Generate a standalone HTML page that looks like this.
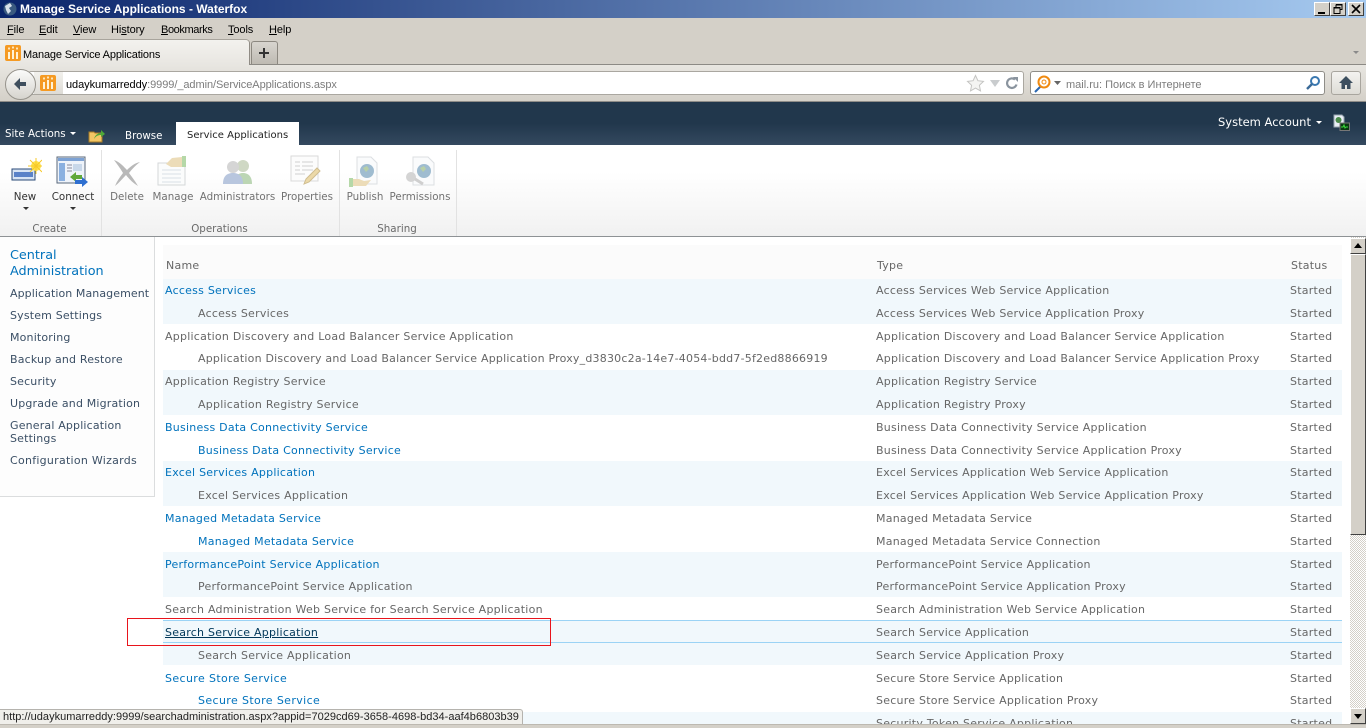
<!DOCTYPE html>
<html><head><meta charset="utf-8"><title>Manage Service Applications - Waterfox</title>
<style>
html,body{margin:0;padding:0;width:1366px;height:728px;overflow:hidden;background:#fff}
div,span,svg{position:absolute;display:block}
u{position:static}
body{font:11px "DejaVu Sans",Verdana,sans-serif;color:#676767}
.t{white-space:nowrap;line-height:14px;height:14px;margin-top:1px;letter-spacing:.24px}
.u{font:11px/16px "Liberation Sans",sans-serif;color:#000;white-space:nowrap;margin-top:1px}
.m{top:21px;height:16px;letter-spacing:-.1px}
.l{color:#0072bc}
.n{color:#3b4f65;left:10px;letter-spacing:.17px}
.h{letter-spacing:0;font-size:10.3px}
.r{left:163px;width:1179px;background:#f1f8fc}
.c{color:#5f5f5f;text-align:center;white-space:nowrap;line-height:14px;font-size:10.3px}
.g{color:#6a6a6a;text-align:center;white-space:nowrap;line-height:14px;top:222px;font-size:10.3px}
.sep{top:150px;width:1px;height:86px;background:#e2e2e2}
.btn{background:#d4d0c8;border:1px solid;border-color:#fff #404040 #404040 #fff;box-sizing:border-box}
</style></head><body>

<div style="left:0;top:0;width:1366px;height:18px;background:linear-gradient(90deg,#0a246a,#a6caf0)"></div>
<svg style="left:2px;top:1px" width="16" height="16" viewBox="0 0 16 16"><circle cx="8" cy="8" r="6.500" fill="#3a5a80"/><path d="M3 5l5-3 2 3-3 2 2 3-3 3-2-4z" fill="#d8e0ea"/></svg>
<div class="u" style="left:20px;top:1px;margin-top:0;color:#fff;font:bold 12px/16px 'Liberation Sans',sans-serif">Manage Service Applications - Waterfox</div>
<div class="btn" style="left:1314px;top:2px;width:16px;height:14px"><div style="left:3px;top:9px;width:7px;height:2px;background:#000"></div></div>
<div class="btn" style="left:1330px;top:2px;width:16px;height:14px"><svg style="left:2px;top:1px" width="10" height="10" viewBox="0 0 10 10"><path d="M3 .5h6v5H7M3 .5V3M1 3.500h6v6H1z" fill="none" stroke="#000"/><path d="M3 1h6M1 4h6" stroke="#000"/></svg></div>
<div class="btn" style="left:1348px;top:2px;width:16px;height:14px"><svg style="left:2px;top:1px" width="10" height="10" viewBox="0 0 10 10"><path d="M1 1l8 8M9 1l-8 8" stroke="#000" stroke-width="1.600"/></svg></div>

<div style="left:0;top:18px;width:1366px;height:47px;background:#d4d0c8"></div>
<div class="u m" style="left:7px"><u>F</u>ile</div>
<div class="u m" style="left:39px"><u>E</u>dit</div>
<div class="u m" style="left:73px"><u>V</u>iew</div>
<div class="u m" style="left:111px">Hi<u>s</u>tory</div>
<div class="u m" style="left:161px;letter-spacing:-.4px"><u>B</u>ookmarks</div>
<div class="u m" style="left:228px"><u>T</u>ools</div>
<div class="u m" style="left:269px"><u>H</u>elp</div>

<div style="left:0;top:40px;width:249px;height:25px;background:linear-gradient(#f3f2ee,#e8e6e1);border-radius:0 3px 0 0;box-shadow:1px 0 0 #908c85,0 -1px 0 #a8a49c"></div>
<svg style="left:5px;top:45px" width="16" height="16" viewBox="0 0 16 16"><rect width="16" height="16" rx="2" fill="#f59a23"/><path d="M3 7h2v7H3zM7 5h2v9H7zM11 7h2v7h-2z" fill="#fff3d8"/><path d="M4 2v3M3 3.500h2M8 1v3M7 2.500h2M12 2v3M11 3.500h2" stroke="#fff3d8" stroke-width=".8"/></svg>
<div class="u" style="left:23px;top:46px;letter-spacing:-.15px">Manage Service Applications</div>
<div style="left:251px;top:41px;width:25px;height:23px;background:linear-gradient(#d8d5cf,#bdb9b1);border:1px solid #8c8880;border-bottom:0;border-radius:3px 3px 0 0"></div>
<svg style="left:258px;top:47px" width="12" height="12" viewBox="0 0 12 12"><path d="M6 1v10M1 6h10" stroke="#333" stroke-width="2"/></svg>
<svg style="left:1352px;top:50px" width="8" height="5"><path d="M1 1h6L4 4z" fill="#8a8a8a"/></svg>

<div style="left:0;top:64px;width:1366px;height:1px;background:#8c8a85;clip-path:inset(0 0 0 249px)"></div>
<div style="left:0;top:65px;width:1366px;height:36px;background:linear-gradient(#e8e6e1,#d4d0c8)"></div>
<div style="left:0;top:101px;width:1366px;height:1px;background:#8e8c88"></div>

<div style="left:28px;top:71px;width:994px;height:22px;background:#fff;border:1px solid #aaa7a0;border-radius:3px"></div>
<div style="left:34px;top:72px;width:29px;height:22px;background:linear-gradient(#f2f1ed,#dedcd6)"></div>
<div style="left:5px;top:69px;width:29px;height:29px;border-radius:50%;background:linear-gradient(#fbfbfa,#d6d4ce);border:1px solid #96938c"></div>
<svg style="left:11px;top:75px" width="18" height="18" viewBox="0 0 18 18"><path d="M9 3L3 9l6 6V11h6V7H9z" fill="#3f4f5e"/></svg>
<svg style="left:40px;top:75px" width="16" height="16" viewBox="0 0 16 16"><rect width="16" height="16" rx="2" fill="#f59a23"/><path d="M3 7h2v7H3zM7 5h2v9H7zM11 7h2v7h-2z" fill="#fff3d8"/><path d="M4 2v3M3 3.500h2M8 1v3M7 2.500h2M12 2v3M11 3.500h2" stroke="#fff3d8" stroke-width=".8"/></svg>
<div class="u" style="left:66px;top:76px;color:#7c7c7c;letter-spacing:-.06px"><span style="position:static;display:inline;color:#000">udaykumarreddy</span>:9999/_admin/ServiceApplications.aspx</div>
<svg style="left:966px;top:74px" width="19" height="19" viewBox="0 0 19 19"><path d="M9.500 1.500l2.400 5.200 5.600.7-4.100 3.900 1.100 5.600-5-2.800-5 2.800 1.100-5.600L1.500 7.400l5.600-.7z" fill="#f4f4f2" stroke="#c4c4c2"/></svg>
<svg style="left:989px;top:79px" width="12" height="9"><path d="M1 1h10L6 8z" fill="#c9ccce"/></svg>
<svg style="left:1005px;top:76px" width="14" height="14" viewBox="0 0 14 14"><path d="M11.500 8.500A4.800 4.800 0 1 1 10 3.500" fill="none" stroke="#8a949e" stroke-width="2.200"/><path d="M8 1h5v5z" fill="#8a949e"/></svg>

<div style="left:1030px;top:71px;width:293px;height:22px;background:#fff;border:1px solid #8f8d88;border-radius:3px"></div>
<svg style="left:1034px;top:75px" width="18" height="18" viewBox="0 0 18 18"><path d="M1 17l6-6" stroke="#2a66b0" stroke-width="2"/><circle cx="10" cy="7" r="5.500" fill="#fff" stroke="#f08a10" stroke-width="2"/><circle cx="10" cy="7" r="2" fill="none" stroke="#f08a10"/></svg>
<svg style="left:1054px;top:81px" width="7" height="5"><path d="M0 0h7L3.500 4z" fill="#666"/></svg>
<div class="u" style="left:1066px;top:76px;color:#7c7c7c">mail.ru: Поиск в Интернете</div>
<svg style="left:1305px;top:75px" width="16" height="16" viewBox="0 0 16 16"><circle cx="10" cy="6" r="4" fill="#fff" stroke="#3a78b0" stroke-width="2"/><path d="M7 9l-5 5" stroke="#3a6a98" stroke-width="2.400"/></svg>
<div style="left:1331px;top:71px;width:28px;height:22px;border:1px solid #a8a59e;border-radius:3px;background:linear-gradient(#f4f3f0,#dedcd6)"></div>
<svg style="left:1338px;top:75px" width="16" height="15" viewBox="0 0 16 15"><path d="M8 1L1 8h2.500v6h3.500v-4h2v4h3.500V8H15z" fill="#3d4f5f"/></svg>

<div style="left:0;top:102px;width:1366px;height:43px;background:linear-gradient(#21374c 0,#21374c 50%,#34495f 100%)"></div>
<div class="t h" style="left:5px;top:126px;color:#fff">Site Actions</div>
<svg style="left:70px;top:132px" width="6" height="4"><path d="M0 0h6L3 3z" fill="#fff"/></svg>
<svg style="left:88px;top:127px" width="18" height="16" viewBox="0 0 18 16"><path d="M1 5h5l1 1h7v9H1z" fill="#f2c665" stroke="#a57a26"/><path d="M6 12c1-4 4-6 7-6V3l4 4-4 3V8c-3 0-5 1-7 4z" fill="#4fa838"/></svg>
<div class="t h" style="left:125px;top:128px;color:#fff">Browse</div>
<div style="left:176px;top:122px;width:123px;height:23px;background:#fff"></div>
<div class="t h" style="left:187px;top:128px;color:#222;font-size:10px">Service Applications</div>
<div class="t" style="left:1218px;top:114px;color:#fff;font-size:11.5px;letter-spacing:0">System Account</div>
<svg style="left:1316px;top:121px" width="6" height="4"><path d="M0 0h6L3 3z" fill="#fff"/></svg>
<svg style="left:1333px;top:114px" width="17" height="17" viewBox="0 0 17 17"><path d="M1 1h8l2 2v10H1z" fill="#e8eef5" stroke="#98a4b0"/><circle cx="5.500" cy="6" r="3" fill="#4a8a4a"/><rect x="7" y="9" width="9.500" height="7.500" fill="#0a3a12" stroke="#777"/><path d="M8 13h2l1-2 1 3 1-1h2" stroke="#3ce03c" fill="none"/></svg>

<div style="left:0;top:145px;width:1366px;height:91px;background:linear-gradient(#fff 0,#fff 30%,#f1f1f1 100%)"></div>
<div style="left:0;top:236px;width:1366px;height:1px;background:#8e9295"></div>
<div class="sep" style="left:101px"></div><div class="sep" style="left:339px"></div><div class="sep" style="left:456px"></div>

<svg style="left:11px;top:158px" width="31" height="25" viewBox="0 0 31 25"><rect x="1" y="11" width="23" height="11" fill="#d8e4f4" stroke="#2a4a78"/><rect x="3" y="14" width="19" height="5" fill="#5a82c8"/><circle cx="25" cy="8" r="5" fill="#ffe24a"/><path d="M25 0v16M17 8h14M19 2l12 12M31 2L19 14" stroke="#f7c928"/></svg>
<svg style="left:56px;top:156px" width="33" height="32" viewBox="0 0 33 32"><rect x="1" y="1" width="28" height="26" fill="#eef3fa" stroke="#58677a"/><rect x="2" y="2" width="26" height="3" fill="#7da2d4"/><rect x="3" y="7" width="6" height="18" fill="#8ab0e0"/><rect x="17" y="8" width="9" height="7" fill="#c8d8ea"/><path d="M11 9h5M11 12h5M11 15h5" stroke="#889"/><path d="M14 21l6-5v3h6v4h-6v3z" fill="#5fa83a"/><path d="M32 26l-6 5v-3h-7v-4h7v-3z" fill="#2f6fd0"/></svg>
<svg style="left:112px;top:158px" width="30" height="29" viewBox="0 0 30 29"><path d="M2 2c6 2 10 7 13 10 4-4 8-7 13-8-4 3-8 7-11 11 3 4 6 8 9 13-5-3-9-7-12-11-4 4-7 8-11 11 2-5 5-9 8-13C8 10 5 6 2 2z" fill="#b9b9b9"/></svg>
<svg style="left:156px;top:155px" width="32" height="31" viewBox="0 0 32 31"><rect x="2" y="8" width="27" height="22" fill="#fbfcfc" stroke="#d4d7d9"/><path d="M6 15h19M6 19h19M6 23h19M6 27h19" stroke="#d8e0e6"/><path d="M10 9l6-6 10-1v10H15z" fill="#ecdcb8"/><rect x="26" y="1" width="4" height="11" fill="#b5d8a8"/></svg>
<svg style="left:222px;top:159px" width="32" height="26" viewBox="0 0 32 26"><circle cx="21" cy="7" r="6" fill="#cfd8c4"/><path d="M12 25c0-8 4-11 9-11s9 3 9 11z" fill="#bcd6b4"/><circle cx="11" cy="8" r="6" fill="#d5d5d5"/><path d="M1 25c0-8 4-11 10-11s10 3 10 11z" fill="#b8c6de"/></svg>
<svg style="left:290px;top:155px" width="32" height="31" viewBox="0 0 32 31"><rect x="1" y="1" width="27" height="25" fill="#fcfcfc" stroke="#dadada"/><path d="M5 7h5M5 11h5M5 15h5M12 7h11M12 11h11M12 15h11M5 19h10" stroke="#d0d0d0"/><path d="M14 29l2-5 11-11 3 3-11 11z" fill="#ecd9a8" stroke="#cfbd90"/></svg>
<svg style="left:348px;top:156px" width="36" height="33" viewBox="0 0 36 33"><path d="M9 1h14l6 6v21H9z" fill="#fafbfc" stroke="#dcdfe2"/><circle cx="19" cy="15" r="7" fill="#9fbcd0"/><path d="M15 12l4-2 2 3-3 3z" fill="#b8d0a8"/><rect x="1" y="22" width="4" height="9" fill="#b5d8a8"/><path d="M5 23h6l5 2 7-1-5 6H5z" fill="#ecdcb8"/></svg>
<svg style="left:404px;top:156px" width="32" height="31" viewBox="0 0 32 31"><path d="M9 1h15l6 6v22H9z" fill="#fafbfc" stroke="#dcdfe2"/><circle cx="20" cy="15" r="7" fill="#9fbcd0"/><path d="M16 12l4-2 2 3-3 3z" fill="#b8d0a8"/><circle cx="7" cy="21" r="5" fill="#d4d4d4"/><path d="M11 23l8 5" stroke="#cfcfcf" stroke-width="3"/></svg>

<div class="c" style="left:0;width:50px;top:190px;color:#333">New</div>
<svg style="left:23px;top:207px" width="6" height="4"><path d="M0 0h6L3 3z" fill="#333"/></svg>
<div class="c" style="left:48px;width:50px;top:190px;color:#333">Connect</div>
<svg style="left:70px;top:207px" width="6" height="4"><path d="M0 0h6L3 3z" fill="#333"/></svg>
<div class="c" style="left:107px;width:40px;top:190px;color:#727272">Delete</div>
<div class="c" style="left:148px;width:50px;top:190px;color:#727272">Manage</div>
<div class="c" style="left:198px;width:79px;top:190px;color:#727272">Administrators</div>
<div class="c" style="left:277px;width:60px;top:190px;color:#727272">Properties</div>
<div class="c" style="left:342px;width:46px;top:190px;color:#727272">Publish</div>
<div class="c" style="left:388px;width:64px;top:190px;color:#727272">Permissions</div>
<div class="g" style="left:0;width:99px">Create</div>
<div class="g" style="left:101px;width:237px">Operations</div>
<div class="g" style="left:339px;width:116px">Sharing</div>

<div style="left:0;top:237px;width:154px;height:259px;background:#fdfdfd;border-right:1px solid #dbddde;border-bottom:1px solid #dbddde"></div>
<div class="t l" style="left:10px;top:247px;font-size:12.8px;line-height:16px;height:16px;letter-spacing:0">Central</div>
<div class="t l" style="left:10px;top:263px;font-size:12.8px;line-height:16px;height:16px;letter-spacing:0">Administration</div>
<div class="t n" style="top:286px;letter-spacing:.08px">Application Management</div>
<div class="t n" style="top:308px">System Settings</div>
<div class="t n" style="top:330px">Monitoring</div>
<div class="t n" style="top:352px">Backup and Restore</div>
<div class="t n" style="top:374px">Security</div>
<div class="t n" style="top:396px">Upgrade and Migration</div>
<div class="t n" style="top:418px">General Application</div>
<div class="t n" style="top:431px">Settings</div>
<div class="t n" style="top:453px;letter-spacing:.27px">Configuration Wizards</div>

<div style="left:163px;top:245px;width:1179px;height:34px;background:#fbfbfb"></div>
<div class="r" style="top:279px;height:45px"></div>
<div class="r" style="top:370px;height:45px"></div>
<div class="r" style="top:461px;height:45px"></div>
<div class="r" style="top:552px;height:45px"></div>
<div class="r" style="top:620px;height:45px"></div>
<div class="r" style="top:712px;height:12px"></div>
<div style="left:163px;top:620px;width:1179px;height:1px;background:#9bd3f5"></div>
<div style="left:163px;top:642px;width:1179px;height:1px;background:#9bd3f5"></div>

<div class="t" style="left:166px;top:258px">Name</div>
<div class="t" style="left:877px;top:258px">Type</div>
<div class="t" style="left:1291px;top:258px">Status</div>

<div class="t l" style="left:165px;top:283px">Access Services</div><div class="t" style="left:876px;top:283px">Access Services Web Service Application</div><div class="t" style="left:1290px;top:283px">Started</div>
<div class="t" style="left:198px;top:306px">Access Services</div><div class="t" style="left:876px;top:306px">Access Services Web Service Application Proxy</div><div class="t" style="left:1290px;top:306px">Started</div>
<div class="t" style="left:165px;top:329px">Application Discovery and Load Balancer Service Application</div><div class="t" style="left:876px;top:329px">Application Discovery and Load Balancer Service Application</div><div class="t" style="left:1290px;top:329px">Started</div>
<div class="t" style="left:198px;top:351px;letter-spacing:.21px">Application Discovery and Load Balancer Service Application Proxy_d3830c2a-14e7-4054-bdd7-5f2ed8866919</div><div class="t" style="left:876px;top:351px">Application Discovery and Load Balancer Service Application Proxy</div><div class="t" style="left:1290px;top:351px">Started</div>
<div class="t" style="left:165px;top:374px">Application Registry Service</div><div class="t" style="left:876px;top:374px">Application Registry Service</div><div class="t" style="left:1290px;top:374px">Started</div>
<div class="t" style="left:198px;top:397px">Application Registry Service</div><div class="t" style="left:876px;top:397px">Application Registry Proxy</div><div class="t" style="left:1290px;top:397px">Started</div>
<div class="t l" style="left:165px;top:420px">Business Data Connectivity Service</div><div class="t" style="left:876px;top:420px">Business Data Connectivity Service Application</div><div class="t" style="left:1290px;top:420px">Started</div>
<div class="t l" style="left:198px;top:443px">Business Data Connectivity Service</div><div class="t" style="left:876px;top:443px">Business Data Connectivity Service Application Proxy</div><div class="t" style="left:1290px;top:443px">Started</div>
<div class="t l" style="left:165px;top:465px">Excel Services Application</div><div class="t" style="left:876px;top:465px">Excel Services Application Web Service Application</div><div class="t" style="left:1290px;top:465px">Started</div>
<div class="t" style="left:198px;top:488px">Excel Services Application</div><div class="t" style="left:876px;top:488px">Excel Services Application Web Service Application Proxy</div><div class="t" style="left:1290px;top:488px">Started</div>
<div class="t l" style="left:165px;top:511px">Managed Metadata Service</div><div class="t" style="left:876px;top:511px">Managed Metadata Service</div><div class="t" style="left:1290px;top:511px">Started</div>
<div class="t l" style="left:198px;top:534px">Managed Metadata Service</div><div class="t" style="left:876px;top:534px">Managed Metadata Service Connection</div><div class="t" style="left:1290px;top:534px">Started</div>
<div class="t l" style="left:165px;top:557px">PerformancePoint Service Application</div><div class="t" style="left:876px;top:557px">PerformancePoint Service Application</div><div class="t" style="left:1290px;top:557px">Started</div>
<div class="t" style="left:198px;top:579px">PerformancePoint Service Application</div><div class="t" style="left:876px;top:579px">PerformancePoint Service Application Proxy</div><div class="t" style="left:1290px;top:579px">Started</div>
<div class="t" style="left:165px;top:602px">Search Administration Web Service for Search Service Application</div><div class="t" style="left:876px;top:602px">Search Administration Web Service Application</div><div class="t" style="left:1290px;top:602px">Started</div>
<div class="t" style="left:165px;top:625px;color:#003759;text-decoration:underline">Search Service Application</div><div class="t" style="left:876px;top:625px">Search Service Application</div><div class="t" style="left:1290px;top:625px">Started</div>
<div class="t" style="left:198px;top:648px">Search Service Application</div><div class="t" style="left:876px;top:648px">Search Service Application Proxy</div><div class="t" style="left:1290px;top:648px">Started</div>
<div class="t l" style="left:165px;top:671px;letter-spacing:.38px">Secure Store Service</div><div class="t" style="left:876px;top:671px">Secure Store Service Application</div><div class="t" style="left:1290px;top:671px">Started</div>
<div class="t l" style="left:198px;top:693px;letter-spacing:.38px">Secure Store Service</div><div class="t" style="left:876px;top:693px">Secure Store Service Application Proxy</div><div class="t" style="left:1290px;top:693px">Started</div>
<div style="left:0;top:712px;width:1350px;height:12px;overflow:hidden"><div class="t" style="left:876px;top:4px">Security Token Service Application</div><div class="t" style="left:1290px;top:4px">Started</div></div>

<div style="left:127px;top:618px;width:422px;height:26px;border:1px solid #e8141c"></div>

<div style="left:1350px;top:237px;width:16px;height:487px;background:repeating-conic-gradient(#d4d0c8 0 25%,#fff 0 50%) 0 0/2px 2px"></div>
<div class="btn" style="left:1350px;top:238px;width:16px;height:16px"><svg style="left:3px;top:4px" width="8" height="5"><path d="M4 0l4 5H0z" fill="#000"/></svg></div>
<div class="btn" style="left:1350px;top:254px;width:16px;height:281px"></div>
<div class="btn" style="left:1350px;top:708px;width:16px;height:16px"><svg style="left:3px;top:5px" width="8" height="5"><path d="M0 0h8L4 5z" fill="#000"/></svg></div>

<div style="left:0;top:709px;width:522px;height:15px;background:#f0efeb;border-top:1px solid #b5b3ae;border-right:1px solid #b5b3ae;border-radius:0 3px 0 0"></div>
<div class="u" style="left:3px;top:708px;color:#222;letter-spacing:.02px">http://udaykumarreddy:9999/searchadministration.aspx?appid=7029cd69-3658-4698-bd34-aaf4b6803b39</div>
<div style="left:0;top:724px;width:1366px;height:4px;background:#d4d0c8;border-top:1px solid #bdb9b1;box-sizing:border-box"></div>
</body></html>
